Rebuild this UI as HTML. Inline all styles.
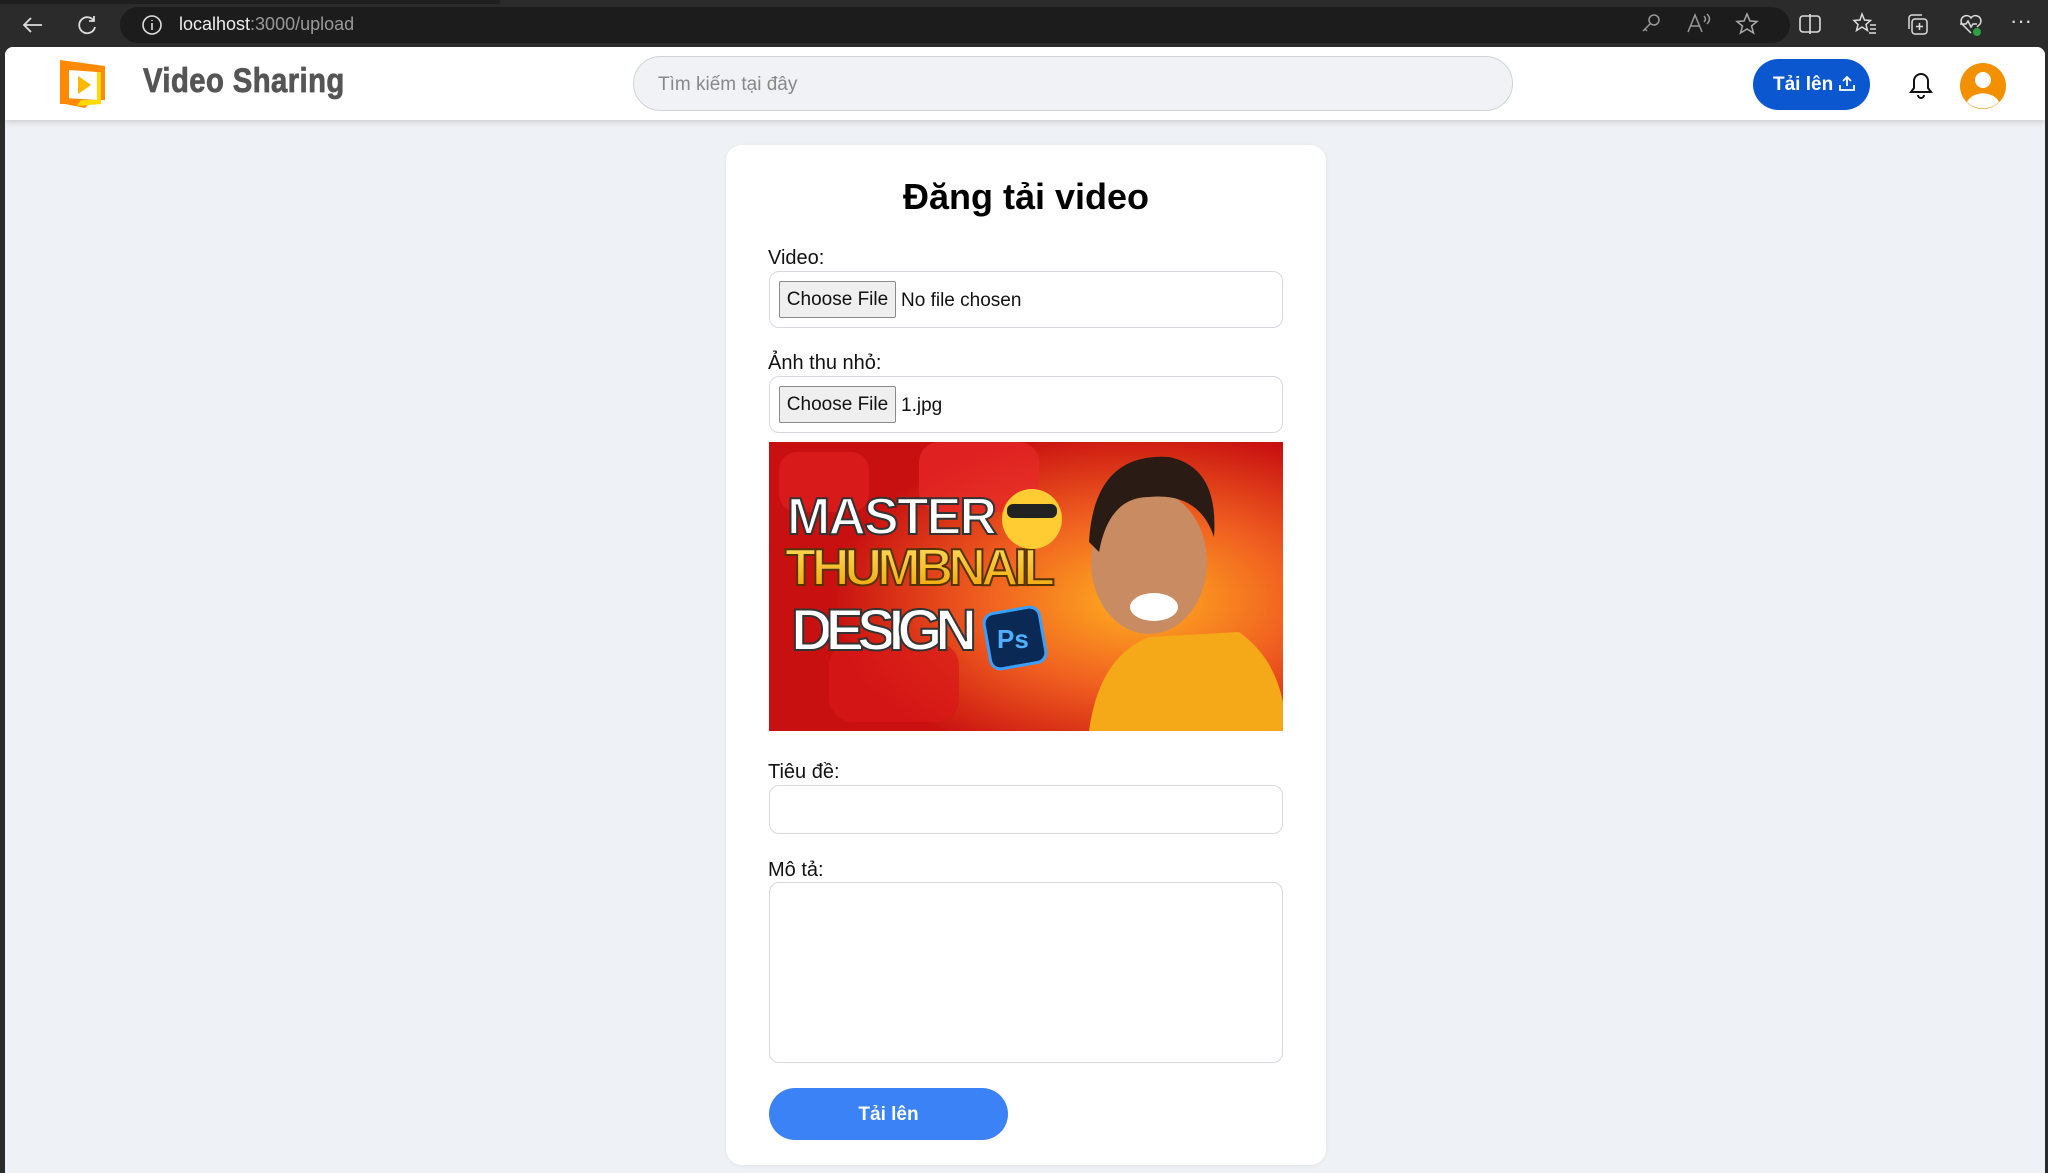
<!DOCTYPE html>
<html><head><meta charset="utf-8"><style>
*{box-sizing:border-box;margin:0;padding:0}
body{width:2048px;height:1173px;overflow:hidden;background:#2b2b2b;font-family:"Liberation Sans",sans-serif;position:relative}
.abs{position:absolute}
.page{left:5px;top:47px;width:2040px;height:1126px;background:#eef1f5;border-radius:8px 8px 0 0;overflow:hidden}
.hdr{left:0;top:0;width:2040px;height:73px;background:#fff;box-shadow:0 2px 6px rgba(0,0,0,.15)}
.lbl{font-size:20px;color:#111;left:768px}
.inp{left:769px;width:514px;background:#fff;border:1px solid #d6d9de;border-radius:10px}
.cf{position:absolute;left:9px;top:9px;width:117px;height:37px;background:#efefef;border:1px solid #8a8a8a;border-radius:2px;font-size:19px;line-height:35px;text-align:center;color:#111}
.ft{position:absolute;left:131px;top:9px;line-height:37px;font-size:19px;color:#111}
.ic{position:absolute;top:12px}
</style></head><body>
<div class="abs" style="left:0;top:0;width:500px;height:4px;background:#1f1f1f"></div>
<div class="abs" style="left:120px;top:7px;width:1670px;height:36px;background:#1c1c1c;border-radius:18px"></div>
<svg class="abs" style="left:20px;top:12px" width="26" height="26" viewBox="0 0 26 26" fill="none" stroke="#ddd" stroke-width="1.8"><path d="M22 13H4M11 6l-7 7 7 7"/></svg>
<svg class="abs" style="left:74px;top:12px" width="26" height="26" viewBox="0 0 26 26" fill="none" stroke="#ddd" stroke-width="1.8"><path d="M20 9a8 8 0 1 0 1 6M20 4v5h-5"/></svg>
<svg class="abs" style="left:140px;top:13px" width="24" height="24" viewBox="0 0 24 24" fill="none" stroke="#ddd" stroke-width="1.6"><circle cx="12" cy="12" r="9"/><path d="M12 10v7M12 7v1"/></svg>
<div class="abs" style="left:179px;top:14px;font-size:18px;color:#eee">localhost<span style="color:#999">:3000/upload</span></div>
<svg class="ic" style="left:1640px" width="22" height="22" viewBox="0 0 22 22" fill="none" stroke="#999" stroke-width="1.5"><circle cx="14" cy="8" r="5"/><path d="M10 12l-7 7M5 17l2 2"/></svg>
<svg class="ic" style="left:1686px" width="26" height="22" viewBox="0 0 26 22" fill="none" stroke="#999" stroke-width="1.5"><path d="M2 20L9 3l7 17M5 14h8M18 4q3 3 0 6M21 2q5 5 0 10"/></svg>
<svg class="ic" style="left:1735px" width="24" height="24" viewBox="0 0 24 24" fill="none" stroke="#aaa" stroke-width="1.5"><path d="M12 2l3 7 7 .5-5.5 4.5 2 7-6.5-4-6.5 4 2-7L2 9.5 9 9z"/></svg>
<svg class="ic" style="left:1798px" width="24" height="24" viewBox="0 0 24 24" fill="none" stroke="#ddd" stroke-width="1.6"><rect x="2" y="4" width="20" height="16" rx="3"/><path d="M12 2v20"/></svg>
<svg class="ic" style="left:1852px" width="26" height="24" viewBox="0 0 26 24" fill="none" stroke="#ddd" stroke-width="1.5"><path d="M10 2l2.5 6 6 .5-4.5 4 1.5 6-5.5-3.5-5.5 3.5 1.5-6L2 8.5 8 8zM18 13h6M18 17h6M17 21h7"/></svg>
<svg class="ic" style="left:1905px" width="24" height="24" viewBox="0 0 24 24" fill="none" stroke="#ddd" stroke-width="1.5"><rect x="7" y="7" width="15" height="15" rx="3"/><path d="M4 17V6a3 3 0 0 1 3-3h10M14.5 11v7M11 14.5h7"/></svg>
<svg class="ic" style="left:1958px" width="26" height="26" viewBox="0 0 26 26" fill="none" stroke="#ddd" stroke-width="1.5"><path d="M13 21L4 12a5 5 0 0 1 9-6 5 5 0 0 1 9 6l-3 3M2 12h6l2-3 3 6 2-3h4"/><circle cx="19" cy="20" r="4" fill="#2ea043" stroke="none"/></svg>
<div class="abs" style="left:2010px;top:8px;font-size:22px;color:#ddd">···</div>

<div class="abs page">
 <div class="abs hdr">
  <svg class="abs" style="left:52px;top:13px" width="52" height="50" viewBox="0 0 52 50"><path d="M3 0L48 6 48 40 36 40 28 48 8 44 8 38 40 40 40 12 12 10 12 44 3 44Z" fill="#ff8a00"/><path d="M40 12v28H24l-4 6 24-2V12z" fill="#ffd900"/><path d="M21 16l13 9-13 9z" fill="#ffcc00"/><path d="M21 16l13 9-13 9z" fill="#f7a400" opacity=".5"/></svg>
  <div class="abs" style="left:138px;top:15px;font-size:34px;font-weight:bold;color:#555;transform:scaleX(.86);transform-origin:left;letter-spacing:0.5px;-webkit-text-stroke:0.8px #555">Video Sharing</div>
  <div class="abs" style="left:628px;top:9px;width:880px;height:55px;border:1px solid #cfd3d9;border-radius:28px;background:#f0f2f5"></div>
  <div class="abs" style="left:653px;top:27px;font-size:19px;color:#888">Tìm kiếm tại đây</div>
  <div class="abs" style="left:1748px;top:12px;width:117px;height:51px;background:#0b57d0;border-radius:26px;color:#fff;font-weight:bold;font-size:19px;line-height:51px;padding-left:20px">Tải lên <svg width="18" height="18" viewBox="0 0 18 18" fill="none" stroke="#fff" stroke-width="1.8" style="vertical-align:-2px"><path d="M9 12V3M5 7l4-4 4 4M2 11v5h14v-5"/></svg></div>
  <svg class="abs" style="left:1904px;top:25px" width="24" height="28" viewBox="0 0 24 28" fill="none" stroke="#111" stroke-width="2"><path d="M12 2a7 7 0 0 0-7 7v7l-3 4h20l-3-4V9a7 7 0 0 0-7-7zM9 23a3 3 0 0 0 6 0"/></svg>
  <svg class="abs" style="left:1955px;top:16px" width="46" height="46" viewBox="0 0 46 46"><circle cx="23" cy="23" r="23" fill="#f39000"/><circle cx="23" cy="17" r="8" fill="#fff"/><path d="M7 39a17 13 0 0 1 32 0a23 23 0 0 1-32 0z" fill="#fff"/></svg>
 </div>
</div>

<div class="abs" style="left:726px;top:145px;width:600px;height:1020px;background:#fff;border-radius:16px;box-shadow:0 1px 4px rgba(0,0,0,.06)"></div>
<div class="abs" style="left:726px;top:176px;width:600px;text-align:center;font-size:36px;font-weight:bold;color:#000">Đăng tải video</div>
<div class="abs lbl" style="top:247px">Video:</div>
<div class="abs inp" style="top:271px;height:57px"><div class="cf">Choose File</div><div class="ft" style="top:10px">No file chosen</div></div>
<div class="abs lbl" style="top:352px">Ảnh thu nhỏ:</div>
<div class="abs inp" style="top:376px;height:57px"><div class="cf">Choose File</div><div class="ft" style="top:10px">1.jpg</div></div>

<svg class="abs" style="left:769px;top:442px" width="514" height="289" viewBox="0 0 514 289">
<defs><radialGradient id="g1" cx="0.72" cy="0.55" r="0.6"><stop offset="0" stop-color="#ffb020"/><stop offset=".5" stop-color="#f06020"/><stop offset="1" stop-color="#c81010"/></radialGradient>
<linearGradient id="tg" x1="0" y1="0" x2="0" y2="1"><stop offset="0" stop-color="#ffe060"/><stop offset="1" stop-color="#f0a000"/></linearGradient></defs>
<rect width="514" height="289" fill="url(#g1)"/>
<rect x="10" y="10" width="90" height="60" rx="18" fill="#e02020" opacity=".7"/>
<rect x="150" y="0" width="120" height="70" rx="20" fill="#e82a2a" opacity=".7"/>
<rect x="60" y="200" width="130" height="80" rx="24" fill="#d81818" opacity=".7"/>
<path d="M320 289 Q330 215 380 195 L470 190 Q505 215 514 260 L514 289Z" fill="#f5a818"/>
<ellipse cx="380" cy="120" rx="58" ry="72" fill="#c98b62"/>
<path d="M320 100 Q325 10 400 15 Q450 25 445 95 Q430 50 380 55 Q340 55 330 110Z" fill="#2a1c14"/>
<ellipse cx="385" cy="165" rx="24" ry="14" fill="#fff"/>
<text x="18" y="92" font-family="Liberation Sans" font-weight="bold" font-size="52" fill="#fff" stroke="#333" stroke-width="2" textLength="210">MASTER</text>
<text x="16" y="143" font-family="Liberation Sans" font-weight="bold" font-size="52" fill="url(#tg)" stroke="#553300" stroke-width="2" textLength="270">THUMBNAIL</text>
<text x="22" y="208" font-family="Liberation Sans" font-weight="bold" font-size="58" fill="#fff" stroke="#333" stroke-width="2" textLength="186">DESIGN</text>
<circle cx="263" cy="77" r="30" fill="#ffcc33"/><rect x="238" y="62" width="50" height="14" rx="6" fill="#222"/>
<rect x="218" y="168" width="56" height="56" rx="10" fill="#0a2a55" stroke="#3aa0ff" stroke-width="3" transform="rotate(-10 246 196)"/>
<text x="228" y="206" font-family="Liberation Sans" font-weight="bold" font-size="26" fill="#4fb0ff">Ps</text>
</svg>

<div class="abs lbl" style="top:761px">Tiêu đề:</div>
<div class="abs inp" style="top:785px;height:49px"></div>
<div class="abs lbl" style="top:859px">Mô tả:</div>
<div class="abs inp" style="top:882px;height:181px"></div>
<div class="abs" style="left:769px;top:1088px;width:239px;height:52px;background:#3b82f6;border-radius:26px;color:#fff;font-weight:bold;font-size:19px;line-height:54px;text-align:center">Tải lên</div>
</body></html>
